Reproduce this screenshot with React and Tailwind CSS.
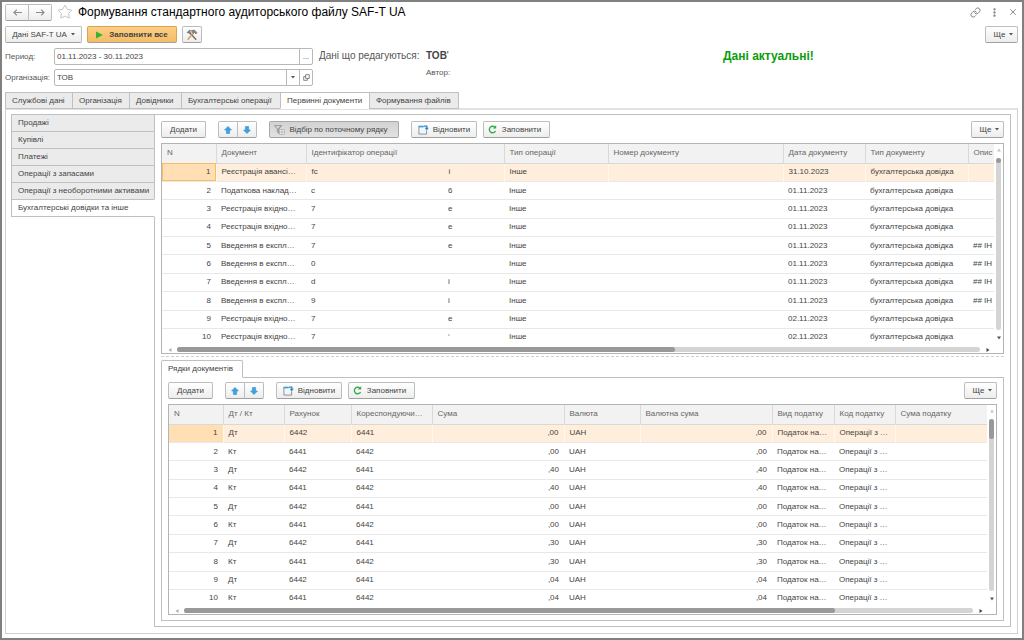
import React, { useState } from 'react'
import { Link as LinkIcon, Star, X, MoreVertical } from 'lucide-react'
import clsx from 'clsx'


const mainTabs = [
  { label: 'Службові дані', width: 'w-[68px]' },
  { label: 'Організація', width: 'w-[58px]' },
  { label: 'Довідники', width: 'w-[53px]' },
  { label: 'Бухгалтерські операції', width: 'w-[100px]' },
  { label: 'Первинні документи', width: 'w-[90px]' },
  { label: 'Формування файлів', width: 'w-[90px]' },
]

const sideTabs = [
  'Продажі',
  'Купівлі',
  'Платежі',
  'Операції з запасами',
  'Операції з необоротними активами',
  'Бухгалтерські довідки та інше',
]

const docColumns = [
  { title: 'N', width: 'w-[54px]', align: 'right' },
  { title: 'Документ', width: 'w-[90px]' },
  { title: 'Ідентифікатор операції', width: 'w-[198px]' },
  { title: 'Тип операції', width: 'w-[104px]' },
  { title: 'Номер документу', width: '' },
  { title: 'Дата документу', width: 'w-[82px]' },
  { title: 'Тип документу', width: 'w-[103px]' },
  { title: 'Опис', width: 'w-[26px]' },
]

const documents = [
  ['Реєстрація авансі…', 'fc', 'i', '31.10.2023', ''],
  ['Податкова наклад…', 'c', '6', '01.11.2023', ''],
  ['Реєстрація вхідно…', '7', 'e', '01.11.2023', ''],
  ['Реєстрація вхідно…', '7', 'e', '01.11.2023', ''],
  ['Введення в експл…', '7', 'e', '01.11.2023', '## ІН'],
  ['Введення в експл…', '0', '', '01.11.2023', '## ІН'],
  ['Введення в експл…', 'd', 'i', '01.11.2023', '## ІН'],
  ['Введення в експл…', '9', 'i', '01.11.2023', '## ІН'],
  ['Реєстрація вхідно…', '7', 'e', '02.11.2023', ''],
  ['Реєстрація вхідно…', '7', '‘', '02.11.2023', ''],
]

const docRows = documents.map(([name, idStart, idEnd, date, note], i) => [
  i + 1,
  name,
  <div className="flex">
    <span className="w-[137px]">{idStart}</span>
    <span>{idEnd}</span>
  </div>,
  'Інше',
  '',
  date,
  'бухгалтерська довідка',
  note,
])

const lineColumns = [
  { title: 'N', width: 'w-[54px]', align: 'right' },
  { title: 'Дт / Кт', width: 'w-[61px]' },
  { title: 'Рахунок', width: 'w-[67px]' },
  { title: 'Кореспондуючи…', width: 'w-[81px]' },
  { title: 'Сума', width: 'w-[132px]', align: 'right' },
  { title: 'Валюта', width: 'w-[76px]' },
  { title: 'Валютна сума', width: 'w-[132px]', align: 'right' },
  { title: 'Вид податку', width: 'w-[62px]' },
  { title: 'Код податку', width: 'w-[61px]' },
  { title: 'Сума податку', width: '' },
]

const sums = [',00', ',00', ',40', ',40', ',00', ',00', ',30', ',30', ',04', ',04']

const lineRows = sums.map((sum, i) => {
  const debit = i % 2 === 0
  return [
    i + 1,
    debit ? 'Дт' : 'Кт',
    debit ? '6442' : '6441',
    debit ? '6441' : '6442',
    sum,
    'UAH',
    sum,
    'Податок на…',
    'Операції з …',
    '',
  ]
})

const Button = ({ className, children, ...props }) => (
  <button
    type="button"
    className={clsx(
      'flex h-[17px] shrink-0 items-center justify-center whitespace-nowrap rounded-[2px] border border-b-[#a0a0a0]',
      className ?? ''
    )}
    {...props}
  >
    {children}
  </button>
)

const plain = 'border-[#bdbdbd] bg-linear-to-b from-white to-[#ededed]'

const Caret = () => (
  <svg viewBox="0 0 4 3" className="h-[3px] w-1" fill="#555"><path d="M0 0h4L2 2.5z" /></svg>
)

const MoreButton = () => (
  <Button className={`${plain} w-[33px] gap-1 pl-1`}>Ще <Caret /></Button>
)

const ArrowIcon = ({ down }) => (
  <svg viewBox="0 0 8 8" className={clsx('size-2', down && 'rotate-180')}>
    <path d="M4 .4 7.5 4H5.6v3.5H2.4V4H.5z" fill="#3ba3e0" stroke="#2b87c4" strokeWidth=".5" />
  </svg>
)

const RestoreIcon = () => (
  <svg viewBox="0 0 11 10" className="h-[10px] w-[11px]" fill="none">
    <path d="M6 1.6H.9v7.5h7.7V5.5" stroke="#8797a6" />
    <path d="M.5 1.5h5" stroke="#3d9edb" strokeWidth="1.6" />
    <path d="M6 1.2h2.8v2" stroke="#2f87ca" strokeWidth="1.3" />
    <path d="M6.6 2.7h4.2L8.7 5.4z" fill="#2f87ca" />
  </svg>
)

const RefreshIcon = () => (
  <svg viewBox="0 0 9 9" className="size-[9px]" fill="none">
    <path d="M6.8 2A3.3 3.3 0 1 0 7.6 6" stroke="#35ad4a" strokeWidth="1.4" />
    <path d="M4.7 3.6h3.5V.3z" fill="#35ad4a" />
  </svg>
)

const FilterIcon = () => (
  <svg viewBox="0 0 11 10" className="h-[10px] w-[11px]" fill="none" stroke="#8a8a8a" strokeWidth=".8">
    <path d="M5.5 4.5h5v5h-5zM8 4.5v5M5.5 7h5" fill="#ececec" stroke="#b5b5b5" />
    <path d="M.6.6h6.8L4.7 4v4.5L3.3 7V4zM7.4.6 3.6 5" fill="#d6d6d6" />
  </svg>
)

const ToolsIcon = () => (
  <svg viewBox="0 0 12 12" className="size-3" fill="none" strokeLinecap="round">
    <path d="m4 4 5.8 6.3" stroke="#7a6a5c" strokeWidth="1.4" />
    <path d="M1.2 3.4 3.4 1.2l1.5.4-1 1 .9.9-1.3 1.3-1-.9z" fill="#888" stroke="#555" strokeWidth=".5" />
    <path d="m2 10.2 5.2-5.8" stroke="#d09a5e" strokeWidth="1.4" />
    <path d="M5.6 1.6 8.4 1l2.6 2.7-1 1.2-1.4-1.3-1.2.9-1-1z" fill="#888" stroke="#555" strokeWidth=".5" />
  </svg>
)

const NavIcon = ({ forward }) => (
  <svg viewBox="0 0 9 7" className={clsx('h-[7px] w-[9px]', forward && 'rotate-180')} fill="none" stroke="#8c8c8c" strokeWidth="1.2">
    <path d="M9 3.5H1M3.8.7 1 3.5l2.8 2.8" />
  </svg>
)

const OpenIcon = () => (
  <svg viewBox="0 0 8 8" className="size-[7px]" fill="none" stroke="#666" strokeWidth=".9">
    <path d="M3 .8h4.2V5H3zM3 3H.8v4.2H5V5" />
  </svg>
)

const MoveButtons = () => (
  <div className="flex">
    <Button className={`${plain} w-5 rounded-r-none`} aria-label="Вгору"><ArrowIcon /></Button>
    <Button className={`${plain} w-5 -ml-px rounded-l-none`} aria-label="Вниз"><ArrowIcon down /></Button>
  </div>
)

const Toolbar = ({ withFilter }) => (
  <div className="flex gap-3">
    <Button className={`${plain} w-[45px]`}>Додати</Button>
    <MoveButtons />
    {withFilter && (
      <Button className="w-[130px] gap-1 border-[#a8a8a8] bg-linear-to-b from-[#d2d2d2] to-[#e2e2e2] pr-[6px]">
        <FilterIcon /> Відбір по поточному рядку
      </Button>
    )}
    <div className="flex gap-[6px]">
      <Button className={`${plain} w-[66px] gap-1`}><RestoreIcon /> Відновити</Button>
      <Button className={`${plain} w-[67px] gap-[5px] pr-1`}><RefreshIcon /> Заповнити</Button>
    </div>
    <div className="ml-auto"><MoreButton /></div>
  </div>
)

const Tip = ({ className }) => (
  <svg viewBox="0 0 4 4" className={clsx('size-1', className)} fill="currentColor"><path d="M0 .5h4L2 3.5z" /></svg>
)

const DataGrid = ({ columns, rows, thumb, framed, dot }) => (
  <div className="mt-[5px] border border-[#b4b4b4]">
    <div className="flex">
      <table className="h-[202px] min-w-0 flex-1 table-fixed border-collapse text-left">
        <thead>
          <tr className="h-[19px] bg-[#f2f2f2] text-[#666]">
            {columns.map((col, i) => (
              <th
                key={col.title}
                className={clsx(
                  'overflow-hidden whitespace-nowrap border-b border-[#d9d9d9] p-0 pl-[5px] font-normal',
                  i < columns.length - 1 && 'border-r',
                  col.width
                )}
              >
                {col.title}
              </th>
            ))}
          </tr>
        </thead>
        <tbody>
          {rows.map((row, r) => (
            <tr key={r} className={clsx(r === 0 ? 'bg-[#ffeedb]' : 'border-t border-[#e8e8e8]')}>
              {row.map((cell, c) => (
                <td
                  key={c}
                  className={clsx(
                    'overflow-hidden whitespace-nowrap p-0',
                    columns[c].align === 'right' ? 'pr-[5px] text-right' : 'pl-[5px]',
                    r === 0 && c > 0 && 'border-l border-[#fff8ef]',
                    r === 0 && c === 0 && 'bg-[#ffdfb3]',
                    r === 0 && c === 0 && framed && 'outline outline-1 -outline-offset-1 outline-[#f7bd62]'
                  )}
                >
                  {cell}
                </td>
              ))}
            </tr>
          ))}
        </tbody>
      </table>
      <div className="flex w-[9px] flex-col items-center pb-[6px] pt-1">
        <Tip className="rotate-180 text-[#c4c4c4]" />
        <div className="my-[6px] w-[5px] flex-1 rounded-full bg-[#d4d4d4]">
          <div className={clsx('w-[5px] rounded-full bg-[#999]', dot ? 'h-[5px]' : 'h-5')}></div>
        </div>
        <Tip className="text-[#555]" />
      </div>
    </div>
    <div className="flex h-[7px] items-center">
      <div className="flex w-[15px] justify-center"><Tip className="rotate-90 text-[#b0b0b0]" /></div>
      <div className="h-[5px] flex-1 rounded-full bg-[#d4d4d4]">
        <div className="h-[5px] rounded-full bg-[#999]" style={{ width: thumb }}></div>
      </div>
      <div className="w-[23px] pl-[6px]"><Tip className="-rotate-90 text-[#444]" /></div>
    </div>
  </div>
)

const App = () => {
  const [tab, setTab] = useState(4)
  const [section, setSection] = useState(5)
  const [period, setPeriod] = useState('01.11.2023 - 30.11.2023')
  const [org, setOrg] = useState('ТОВ')

  return (
    <div className="flex min-h-screen flex-col border-2 border-[#808080] bg-white pb-1 pl-[3px] pr-1 font-['Liberation_Sans',Arial,sans-serif] text-[8px] leading-[10px] text-[#444]">
      <header className="flex h-5 items-center">
        <div className="flex">
          <Button className={`${plain} w-6 rounded-r-none`} aria-label="Назад"><NavIcon /></Button>
          <Button className={`${plain} w-6 -ml-px rounded-l-none`} aria-label="Вперед"><NavIcon forward /></Button>
        </div>
        <Star size={16} strokeWidth={1} color="#a3a3a3" className="ml-[5px]" />
        <h1 className="ml-[5px] text-[12px] leading-4 text-black">
          Формування стандартного аудиторського файлу SAF-T UA
        </h1>
        <div className="ml-auto flex items-center gap-2 text-[#777]">
          <button type="button" aria-label="Посилання"><LinkIcon size={11} strokeWidth={2} /></button>
          <button type="button" aria-label="Меню"><MoreVertical size={11} strokeWidth={3} /></button>
          <button type="button" aria-label="Закрити"><X size={10} strokeWidth={2} /></button>
        </div>
      </header>

      <div className="mt-1 flex">
        <Button className={`${plain} w-[77px] gap-1`}>Дані SAF-T UA <Caret /></Button>
        <Button className="ml-[5px] w-[90px] gap-[6px] border-[#d9a44c] bg-linear-to-b from-[#fccf86] to-[#f5bc66] font-bold">
          <svg viewBox="0 0 7 8" className="h-2 w-[7px]" fill="#3bb22d"><path d="M0 .5 7 4 0 7.5z" /></svg>
          Заповнити все
        </Button>
        <Button className={`${plain} ml-[5px] w-5`} aria-label="Інструменти"><ToolsIcon /></Button>
        <div className="ml-auto"><MoreButton /></div>
      </div>

      <div className="mt-[5px] flex text-[#555]">
        <div className="grid w-[308px] grid-cols-[49px_1fr] items-center gap-y-1">
          <label htmlFor="period">Период:</label>
          <div className="flex h-[17px] rounded-[2px] border border-[#b8b8b8]">
            <input
              id="period"
              className="min-w-0 flex-1 px-[2px] text-[#444] outline-none"
              value={period}
              onChange={(e) => setPeriod(e.target.value)}
            />
            <button type="button" className="w-[13px] border-l border-[#b8b8b8]">...</button>
          </div>
          <label htmlFor="org">Організація:</label>
          <div className="flex h-[17px] rounded-[2px] border border-[#b8b8b8]">
            <input
              id="org"
              className="min-w-0 flex-1 px-[2px] text-[#444] outline-none"
              value={org}
              onChange={(e) => setOrg(e.target.value)}
            />
            <button type="button" aria-label="Вибрати" className="flex w-[13px] items-center justify-center border-l border-[#b8b8b8]"><Caret /></button>
            <button type="button" aria-label="Відкрити" className="flex w-[13px] items-center justify-center border-l border-[#b8b8b8]"><OpenIcon /></button>
          </div>
        </div>
        <div className="ml-[6px] w-[107px] text-[10px] leading-4">Дані що редагуються:</div>
        <div>
          <div className="text-[10px] font-bold leading-4 text-[#444]">ТОВ<span className="font-normal">'</span></div>
          <div className="mt-1">Автор:</div>
        </div>
        <div className="ml-auto w-[295px] text-[12px] font-bold leading-4 text-[#0c9c0c]">Дані актуальні!</div>
      </div>

      <nav className="relative z-10 mt-[6px] flex">
        {mainTabs.map((item, i) => (
          <button
            key={item.label}
            type="button"
            onClick={() => setTab(i)}
            className={clsx(
              'flex h-[17px] items-center justify-start whitespace-nowrap border border-[#c0c0c0] pl-[6px]',
              i > 0 && '-ml-px',
              item.width,
              tab === i ? 'border-b-white bg-white' : 'bg-[#ebebeb]'
            )}
          >
            {item.label}
          </button>
        ))}
      </nav>

      <main className="-mt-px flex flex-1 border border-t-2 border-[#cfcfcf] border-t-[#e2e2e2] pb-[6px] pl-[5px] pr-[6px] pt-1">
        <nav className="relative z-10 -mr-px w-36 shrink-0">
          {sideTabs.map((label, i) => (
            <button
              key={label}
              type="button"
              onClick={() => setSection(i)}
              className={clsx(
                'block h-[18px] w-full whitespace-nowrap border border-[#c0c0c0] pl-[6px] text-left',
                i > 0 && '-mt-px',
                section === i ? 'border-r-white bg-white' : 'bg-[#ebebeb]'
              )}
            >
              {label}
            </button>
          ))}
        </nav>

        <section className="min-w-0 flex-1 border border-[#c0c0c0] px-[6px] pb-[5px] pt-[6px]">
          <Toolbar withFilter />
          <DataGrid columns={docColumns} rows={docRows} thumb="62%" framed dot />

          <div className="mt-[2px] border-t border-dashed border-[#d0d0d0]"></div>

          <div className="mt-[3px] flex">
            <button type="button" className="relative z-10 h-[18px] w-[82px] rounded-t-[2px] border border-b-white border-[#c0c0c0] bg-white pl-[6px] text-left">
              Рядки документів
            </button>
          </div>
          <div className="-mt-px border border-[#c0c0c0] px-[6px] pb-[5px] pt-1">
            <Toolbar />
            <DataGrid columns={lineColumns} rows={lineRows} thumb="82.5%" />
          </div>
        </section>
      </main>
    </div>
  )
}

export default App
